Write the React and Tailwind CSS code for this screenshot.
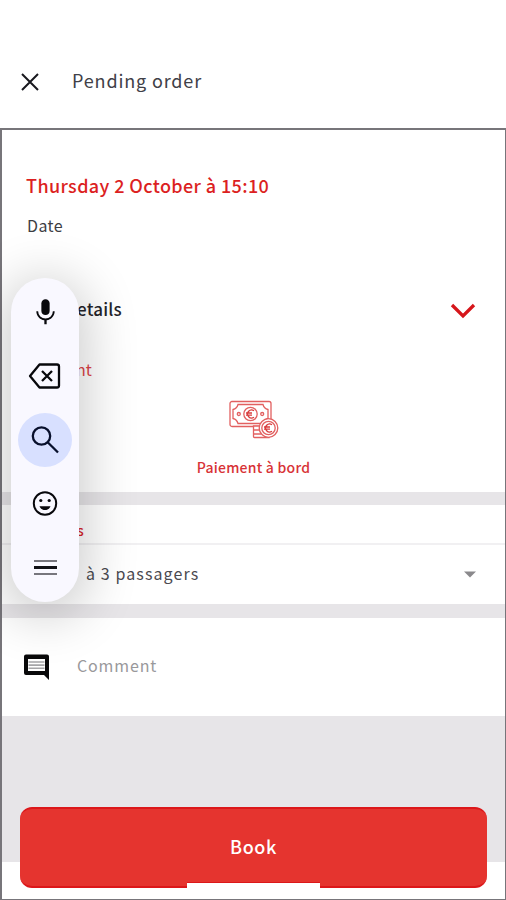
import React from "react";

function Microphone() {
  return (
    <svg width="31" height="31" viewBox="0 0 24 24" fill="#08080c">
      <path d="M12 14c1.780 0 3.200-1.400 3.200-3.200V5c0-1.780-1.420-3.200-3.200-3.200S8.800 3.220 8.800 5v5.800c0 1.800 1.420 3.200 3.200 3.200z" />
      <path d="M17.700 11a5.700 5.700 0 0 1-11.400 0H4.900c0 3.650 2.700 6.550 6.200 7V21h1.800v-3c3.500-.45 6.200-3.350 6.200-7z" />
    </svg>
  );
}

function Backspace() {
  return (
    <svg width="34" height="28" viewBox="0 0 34 28" fill="none" stroke="#08080c" strokeWidth="2.300" strokeLinejoin="round">
      <path d="M11.500 2.500H29Q31 2.500 31 4.500V23.500Q31 25.500 29 25.500H11.500L2 14Z" />
      <path d="M14 9l10 10M24 9l-10 10" />
    </svg>
  );
}

function Magnifier() {
  return (
    <svg width="30" height="30" viewBox="0 0 30 30" fill="none" stroke="#08102c" strokeWidth="2.300">
      <circle cx="11.500" cy="11" r="8.700" />
      <path d="M17.700 17.200L28 27.500" />
    </svg>
  );
}

function Smiley() {
  return (
    <svg width="28" height="28" viewBox="0 0 28 28" fill="none">
      <circle cx="14" cy="13.500" r="11.200" stroke="#08080c" strokeWidth="2" />
      <circle cx="9.800" cy="10.500" r="1.600" fill="#08080c" />
      <circle cx="18.200" cy="10.500" r="1.600" fill="#08080c" />
      <path d="M8.500 16.200h11c-.7 2.300-2.900 3.900-5.500 3.900s-4.800-1.600-5.500-3.900z" fill="#08080c" />
    </svg>
  );
}

function Banknote() {
  return (
    <svg width="50" height="39" viewBox="0 0 50 39" fill="none" stroke="#e26060" strokeWidth="1.300">
      <rect x="1" y="1.500" width="41" height="25" rx="2" />
      <path d="M9 4.500h25q1 4 5 5v9q-4 1-5 5H9q-1-4-5-5v-9q4-1 5-5z" />
      <circle cx="21.500" cy="14" r="6.700" />
      <path d="M25 10.800a4 4 0 1 0 0 6.400M17 13h6M17 15.200h6" stroke="#d83c3c" />
      <circle cx="9.800" cy="14" r="1.500" />
      <circle cx="33.200" cy="14" r="1.500" />
      <path d="M32 26H24.500V36.500q0 1 1 1H40V26z" fill="#fff" />
      <path d="M24.500 30H31M24.500 34H32" />
      <circle cx="39.500" cy="28" r="9.300" fill="#fff" />
      <circle cx="39.500" cy="28" r="6.700" />
      <path d="M43 24.800a4 4 0 1 0 0 6.400M35 27h6M35 29.200h6" stroke="#d83c3c" />
    </svg>
  );
}

function InputToolbar() {
  return (
    <div className="absolute left-[11px] top-[278px] flex h-[324px] w-[68px] flex-col items-center justify-between rounded-full bg-[#f9f8ff] py-[7px] shadow-[0_8px_52px_8px_rgba(0,0,0,0.2)]">
      <div className="flex size-[54px] items-center justify-center"><Microphone /></div>
      <div className="flex size-[54px] items-center justify-center"><Backspace /></div>
      <div className="flex size-[54px] items-center justify-center rounded-full bg-[#d8e0ff]"><Magnifier /></div>
      <div className="flex size-[54px] items-center justify-center"><Smiley /></div>
      <div className="flex size-[54px] flex-col items-center justify-center gap-[4px] pb-[1px]">
        <span className="h-[2.500px] w-[23px] bg-[#77767d]" />
        <span className="h-[2.500px] w-[23px] bg-[#111116]" />
        <span className="h-[2.500px] w-[23px] bg-[#77767d]" />
      </div>
    </div>
  );
}

export default function App() {
  return (
    <div className="relative flex h-[900px] w-[506px] flex-col overflow-hidden bg-white font-['Noto_Sans_CJK_SC','Noto_Sans',sans-serif]">
      <header className="flex h-[128px] shrink-0 items-center pl-[21px] pt-[35px]">
        <svg width="18" height="18" viewBox="0 0 18 18" fill="none" stroke="#18181e" strokeWidth="2">
          <path d="M1 1l16 16M17 1L1 17" />
        </svg>
        <h1 className="mb-[4px] ml-[33px] whitespace-nowrap text-[18px] leading-6 tracking-[0.850px] text-[#404047]">Pending order</h1>
      </header>

      <main className="flex h-[772px] shrink-0 flex-col border-b border-l-2 border-r border-t-2 border-[#77757a] bg-white">
        <section className="flex h-[362px] shrink-0 flex-col">
          <h2 className="ml-[24px] mt-[43px] h-6 whitespace-nowrap text-[18px] font-medium leading-6 tracking-[0.380px] text-[#dc1f22]">Thursday 2 October à 15:10</h2>
          <p className="ml-[25px] mt-[18px] h-5 text-[16px] leading-5 tracking-[0.400px] text-[#3d3d43]">Date</p>
          <div className="mt-[60px] flex h-[28px] items-center justify-between pl-[75px] pr-[29px]">
            <span className="text-[17px] font-medium leading-6 tracking-[0.200px] text-[#242429]">etails</span>
            <svg className="mt-[3px]" width="26" height="16" viewBox="0 0 26 16" fill="none" stroke="#d6161b" strokeWidth="3.300">
              <path d="M2 2l11 11L24 2" />
            </svg>
          </div>
          <span className="ml-[74px] mt-[36px] h-5 text-[16px] leading-5 text-[#dc4348]">nt</span>
          <div className="mt-[21px] flex flex-col items-center">
            <Banknote />
            <span className="mt-[18px] whitespace-nowrap text-[14px] font-medium leading-5 tracking-[0.230px] text-[#d83236]">Paiement à bord</span>
          </div>
        </section>
        <div className="h-[13px] shrink-0 bg-[#e7e5e8]" />
        <section className="flex h-[38px] shrink-0 items-center pl-[75px] pt-[12px]">
          <span className="text-[14px] font-medium leading-5 text-[#d81f28]">s</span>
        </section>
        <div className="h-[2px] shrink-0 bg-[#f1f0f2]" />
        <section className="flex h-[59px] shrink-0 items-center justify-between pl-[84px] pr-[29px]">
          <span className="mb-[4px] whitespace-nowrap text-[16px] leading-5 tracking-[1.100px] text-[#4b4a50]">à 3 passagers</span>
          <svg width="12" height="7" viewBox="0 0 12 7" fill="#8a898c"><path d="M0 .5h12L6 6.500z" /></svg>
        </section>
        <div className="h-[14px] shrink-0 bg-[#e7e5e8]" />
        <section className="flex h-[98px] shrink-0 items-center pl-[21px]">
          <svg width="27" height="27" viewBox="0 0 27 27">
            <path fill="#09090a" fillRule="evenodd" d="M3 .5h21q2 0 2 2v23.500l-5-5H3q-2 0-2-2V2.500q0-2 2-2zM5 5v12h17V5z" />
            <path stroke="#a5a5a8" strokeWidth="1.600" d="M5.500 8h16M5.500 11.100h16M5.500 14.200h16" />
          </svg>
          <span className="mb-[4px] ml-[27px] text-[16px] leading-5 tracking-[0.850px] text-[#99989b]">Comment</span>
        </section>
        <footer className="flex min-h-0 flex-1 flex-col bg-[linear-gradient(#e7e5e8_0_146px,#fff_146px)] pl-[18px] pr-[18px] pt-[91px]">
          <button className="flex h-[81px] flex-col items-center justify-between rounded-[12px] border-y-2 border-[#dc171a] bg-[#e5342f]">
            <span className="mt-[25px] text-[18px] font-medium leading-6 tracking-[0.600px] text-white">Book</span>
            <span className="-mb-[2px] h-[6px] w-[133px] border-t border-[#dc171a] bg-white" />
          </button>
        </footer>
      </main>
      <InputToolbar />
    </div>
  );
}
